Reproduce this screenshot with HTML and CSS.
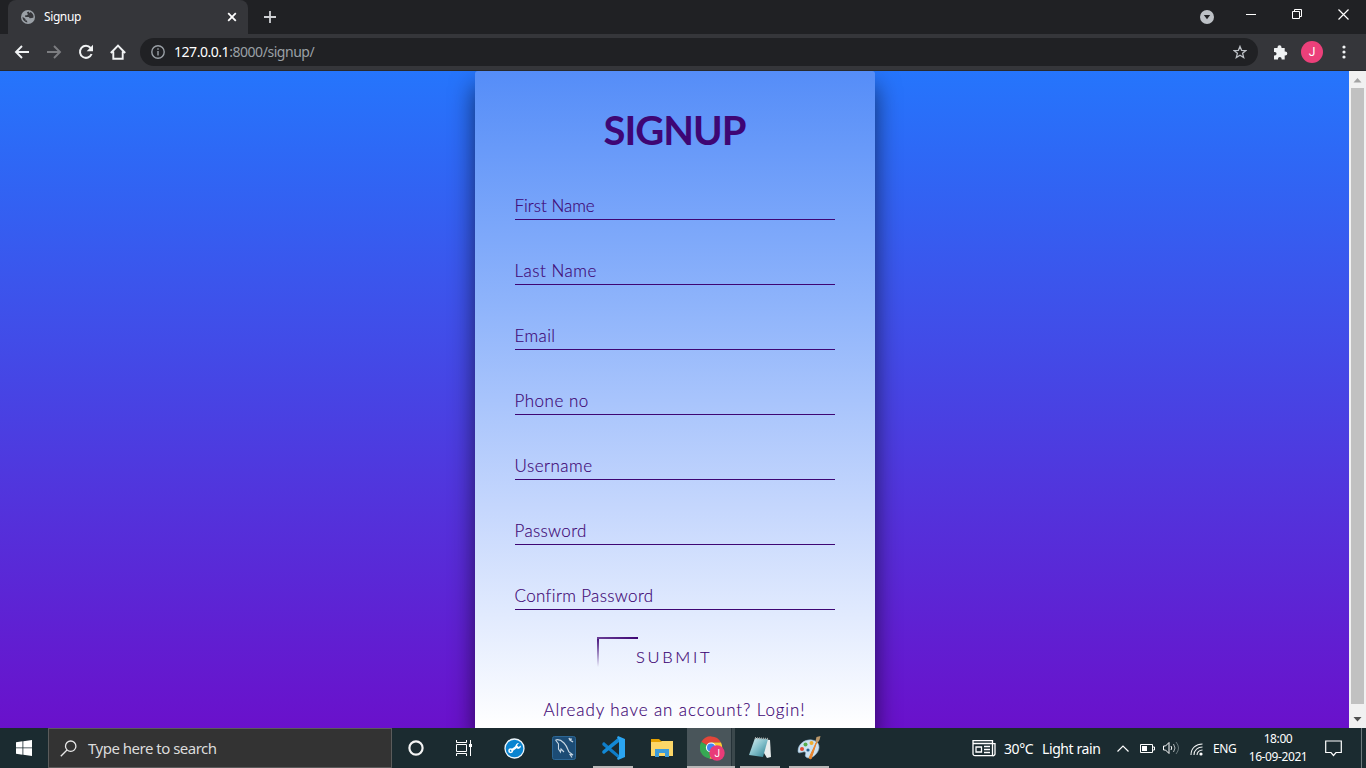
FILE: index.html
```html
<!DOCTYPE html>
<html lang="en">
<head>
<meta charset="utf-8">
<title>Signup</title>
<link rel="stylesheet" href="styles.css">
</head>
<body>
<div class="screen">
  <header class="tabstrip">
    <div class="tab">
      <svg class="globe" width="14" height="14" viewBox="0 0 14 14"><circle cx="7" cy="7" r="7" fill="#9aa0a6"/><path d="M7.500 1.500 5.800 2.600 7 4.200 5.800 5.300H4.200V7h3.600l1 1.200L11 8l1.500-.6a5.500 5.500 0 0 0-3-5.300L8.600 3ZM1.500 6.800l3 2.200v1.500H6l.3 2A5.500 5.500 0 0 1 1.500 6.800Z" fill="#35363a"/></svg>
      <span class="tab-title">Signup</span>
      <svg width="10" height="10" viewBox="0 0 10 10"><path d="m1.200 1.200 7.600 7.600m0-7.600L1.200 8.800" stroke="#fff" stroke-width="1.800"/></svg>
    </div>
    <svg class="plus" width="12" height="12" viewBox="0 0 12 12"><path d="M6 0v12M0 6h12" stroke="#cfd1d4" stroke-width="1.800"/></svg>
    <div class="window-buttons">
      <svg class="tab-search" width="14" height="14" viewBox="0 0 14 14"><circle cx="7" cy="7" r="7" fill="#bdc1c6"/><path d="M3.800 5h6.400L7 9.300Z" fill="#202124"/></svg>
      <svg width="10" height="10" viewBox="0 0 10 10"><path d="M0 5.500h10" stroke="#fff"/></svg>
      <svg width="10" height="10" viewBox="0 0 10 10" fill="none" stroke="#fff"><path d="M.5 2.500h7v7h-7zM2.500 2.500v-2h7v7h-2"/></svg>
      <svg width="11" height="11" viewBox="0 0 11 11"><path d="m.5.500 10 10m0-10-10 10" stroke="#fff" stroke-width="1.200"/></svg>
    </div>
  </header>

  <nav class="toolbar">
    <svg width="16" height="14" viewBox="0 0 16 14" fill="none" stroke="#f1f3f4" stroke-width="1.900"><path d="M15 7H2M8 1 2 7l6 6"/></svg>
    <svg width="16" height="14" viewBox="0 0 16 14" fill="none" stroke="#7c7d80" stroke-width="1.900"><path d="M1 7h13M8 1l6 6-6 6"/></svg>
    <svg width="16" height="16" viewBox="0 0 16 16" fill="none" stroke="#f1f3f4" stroke-width="2"><path d="M13.600 10A6 6 0 1 1 12.600 4"/><path d="M15 .800v6.400H8.700Z" fill="#f1f3f4" stroke="none"/></svg>
    <svg width="16" height="16" viewBox="0 0 16 16" fill="none" stroke="#f1f3f4" stroke-width="1.900"><path d="M.8 9 8 1.700 15.200 9M3.300 7.500v7.300h9.400V7.500"/></svg>
    <div class="address">
      <svg width="14" height="14" viewBox="0 0 14 14" fill="none" stroke="#9aa0a6" stroke-width="1.400"><circle cx="7" cy="7" r="6.200"/><path d="M7 6v4.500M7 3.300v1.500"/></svg>
      <span class="url"><b>127.0.0.1</b>:8000/signup/</span>
      <svg width="14" height="14" viewBox="0 0 14 14" fill="none" stroke="#bdc1c6" stroke-width="1.300"><path d="m7 1.400 1.600 3.900 4.300.3-3.300 2.700 1.100 4.200L7 10.200l-3.700 2.300 1.100-4.200L1.100 5.600l4.300-.3Z"/></svg>
    </div>
    <svg class="puzzle" width="15" height="15" viewBox="0 0 15 15" fill="#f1f3f4"><path d="M1.500 3h3V2.200a2 2 0 0 1 4 0V3h3.200v3.500h.6a2 2 0 0 1 0 4h-.6v4H8.600v-.8a1.800 1.800 0 0 0-3.600 0v.8H1v-4h.8a1.700 1.700 0 0 0 0-3.500H1V3.500Z"/></svg>
    <span class="avatar">J</span>
    <svg class="menu" width="4" height="14" viewBox="0 0 4 14" fill="#f1f3f4"><circle cx="2" cy="2" r="1.600"/><circle cx="2" cy="7" r="1.600"/><circle cx="2" cy="12" r="1.600"/></svg>
  </nav>

  <div class="viewport">
    <main class="page">
      <form class="card">
        <h1>SIGNUP</h1>
        <label class="field first">First Name</label>
        <label class="field last">Last Name</label>
        <label class="field email">Email</label>
        <label class="field phone">Phone no</label>
        <label class="field user">Username</label>
        <label class="field pass">Password</label>
        <label class="field confirm">Confirm Password</label>
        <div class="submit">SUBMIT</div>
        <p class="login">Already have an account? Login!</p>
      </form>
    </main>
    <div class="scrollbar">
      <svg width="17" height="17" viewBox="0 0 17 17"><path d="M4.500 11.500h8l-4-4.500Z" fill="#a3a3a3"/></svg>
      <div class="thumb"></div>
      <svg width="17" height="17" viewBox="0 0 17 17"><path d="M4.500 6h8l-4 4.500Z" fill="#505050"/></svg>
    </div>
  </div>

  <footer class="taskbar">
    <div class="start"><svg width="16" height="16" viewBox="0 0 16 16" fill="#fff"><path d="m0 2.200 6.500-.9v6.200H0zM7.300 1.200 16 0v7.500H7.300zM0 8.300h6.500v6.400L0 13.800zM7.300 8.300H16V16l-8.700-1.200z"/></svg></div>
    <div class="search">
      <svg width="17" height="17" viewBox="0 0 17 17" fill="none" stroke="#e8e8e8" stroke-width="1.300"><circle cx="10.700" cy="6.200" r="5.200"/><path d="M7 10 .8 16.200"/></svg>
      <span>Type here to search</span>
    </div>
    <div class="slot cortana"><svg width="16" height="16" viewBox="0 0 16 16"><circle cx="8" cy="8" r="6.600" fill="none" stroke="#f4f4f4" stroke-width="2.200"/></svg></div>
    <div class="slot taskview"><svg width="17" height="16" viewBox="0 0 17 16" fill="none" stroke="#fff"><path d="M1.500 0v2.500h10V0M1.500 16v-2.500h10V16M1.500 4.500h10v7h-10zM15.500 0v16"/><path d="M14 4h3v3h-3z" fill="#fff" stroke="none"/></svg></div>
    <div class="slot"><svg width="21" height="21" viewBox="0 0 21 21"><circle cx="10.500" cy="10.500" r="9.500" fill="#0a84d0" stroke="#eef6fb" stroke-width="1.300"/><path d="m7.500 12.500 5.500-4" stroke="#fff" stroke-width="2.200"/><path d="M17 7.500 14.500 9 13 7.300 15 5a3.600 3.600 0 0 0-3.600 4.300L14 11a3.600 3.600 0 0 0 3-3.500Z" fill="#fff"/><circle cx="6.700" cy="12.700" r="1.700" fill="none" stroke="#fff" stroke-width="1.500"/></svg></div>
    <div class="slot"><svg width="24" height="24" viewBox="0 0 24 24" fill="none" stroke="#c7d6e2"><rect x=".5" y=".5" width="23" height="23" rx="2" fill="#1c4c75" stroke="#2c6695"/><path d="M3.500 4c3-1 5.500 0 8.500 3 3 3 4 7 5 9l4 3-3-.500 2 3M3.500 4l3 4v5l2 3 .5-3 3 3" stroke-width="1.100"/><path d="m17 2 1 2 3 2M19.500 2.500 18 4.500" stroke-width="1.500"/></svg></div>
    <div class="slot open"><svg width="24" height="24" viewBox="0 0 24 24"><path d="M1.500 7 3 6l15 13v4L1.300 9Z" fill="#0f7dc8"/><path d="M1.300 15 18 1v5L3 18l-1.700-1Z" fill="#1389d5"/><path d="m17 0 7 3v18l-7 3-1-1.500 2-2V4l-2-2.500Z" fill="#2ba5f1"/></svg></div>
    <div class="slot"><svg width="22" height="20" viewBox="0 0 22 20"><path d="M0 1h8l2 2h12v4H0z" fill="#e5a100"/><path d="M0 4h10l1-1h11v15H0z" fill="#fcd667"/><path d="M4 19v-8h14v8h-4v-4H8v4z" fill="#3d9cdb"/></svg></div>
    <div class="slot open active"><svg width="27" height="25" viewBox="0 0 27 25"><path d="M11 11.500 1.300 6A11.200 11.200 0 0 1 21 6.500H11Z" fill="#e24639"/><path d="M11 11.500 1.300 5.900A11.200 11.200 0 0 0 9.500 22.600l4.500-7.500Z" fill="#36a853"/><path d="M11 6.500h10A11.200 11.200 0 0 1 9.500 22.600L15 13Z" fill="#fbc934"/><circle cx="11" cy="11.500" r="5.100" fill="#fff"/><circle cx="11" cy="11.500" r="4" fill="#4285f4"/><circle cx="17" cy="17" r="7.700" fill="#e93b78"/><text x="14.500" y="21" class="badge">J</text></svg></div>
    <div class="slot open"><svg width="24" height="24" viewBox="0 0 24 24"><defs><linearGradient id="pad" x2="1" y2="1"><stop stop-color="#def2f4"/><stop offset=".5" stop-color="#82bfca"/><stop offset="1" stop-color="#287b8d"/></linearGradient></defs><path d="m7 2 15 2 1 17-4 1Z" fill="#e7ecec"/><path d="M7 2 20 3l-5 18-14-2Z" fill="url(#pad)"/><path d="m7 2 14 1" stroke="#a1a6a5" stroke-width="2" stroke-dasharray="1 1"/></svg></div>
    <div class="slot open"><svg width="24" height="24" viewBox="0 0 24 24"><path d="M1 15C1 8 8 3 15 4c8 1 9 9 4 14-3 4-8 5-10 3s1-4-1-5-7 3-7-1Z" fill="#cce2f1" stroke="#8fb5d0" stroke-width=".6"/><circle cx="5" cy="13" r="2" fill="#e34a32"/><circle cx="8.500" cy="8.500" r="2" fill="#56ad4c"/><circle cx="14.500" cy="7" r="2" fill="#eead31"/><circle cx="11" cy="14" r="1.600" fill="#205f90"/><path d="M20 5 14 23l-2-1Z" fill="#e8852e" stroke="#e8852e"/><path d="m18.500 5 1-4 4-1-1 4-2 3Z" fill="#ba976a"/></svg></div>
    <div class="tray">
      <svg width="24" height="17" viewBox="0 0 24 17" fill="none" stroke="#fff" stroke-width="1.300"><path d="M3 .700h17.500v15H3a2 2 0 0 1-2-2v-13Zm17.500 3H23v10a2 2 0 0 1-2.500 2M1 3.500h19.500"/><path d="M4 7h5.500v5H4zM12 6.500h6M12 9.500h6M12 12.500h6"/></svg>
      <span class="temp">30°C</span><span class="rain">Light rain</span>
      <svg class="chevron" width="12" height="7" viewBox="0 0 12 7" fill="none" stroke="#fff" stroke-width="1.200"><path d="m.5 6.500 5.500-5.500 5.500 5.500"/></svg>
      <svg class="battery" width="15" height="9" viewBox="0 0 15 9"><path d="M.5.500h12v8H.5zM13 3h1.500v3H13" fill="none" stroke="#fff"/><path d="M2 2h5v5H2z" fill="#fff"/></svg>
      <svg class="volume" width="17" height="14" viewBox="0 0 17 14" fill="none" stroke="#fff"><path d="M.5 5h2L6 1.500v11L2.500 9h-2zM8 5q1.500 2 0 4"/><path d="M10.500 3q3 4 0 8" stroke="#b2b8b9"/><path d="M13 1q5 6 0 12" stroke="#68777a"/></svg>
      <svg class="wifi" width="13" height="13" viewBox="0 0 13 13" fill="none" stroke="#f0f2f2" stroke-width="1.100"><path d="M1 12C1 5 6 1 12.500 1M4 12c0-5 4-8 8.500-8M7 12c0-3 2.500-5 5.500-5"/><circle cx="11" cy="11" r="1.600" fill="#fff" stroke="none"/></svg>
      <span class="lang">ENG</span>
      <div class="clock"><span class="time">18:00</span><span class="date">16-09-2021</span></div>
      <svg class="notice" width="17" height="17" viewBox="0 0 17 17" fill="none" stroke="#fff" stroke-width="1.200"><path d="M.7 1h15.600v11.500H11l-2.500 3-2.500-3H.7Z"/></svg>
    </div>
    <div class="show-desktop"></div>
  </footer>
</div>
</body>
</html>
```
FILE: styles.css
```css
* { box-sizing: border-box; }
body { margin: 0; font-family: "Noto Sans", sans-serif; }
svg { display: block; flex: none; }
.screen { width: 1366px; height: 768px; display: flex; flex-direction: column; overflow: hidden; }

.tabstrip { height: 34px; background: #202124; display: flex; padding-left: 8px; align-items: center; }
.tab { width: 240px; height: 34px; background: #35363a; border-radius: 8px 8px 0 0; display: flex; align-items: center; padding: 0 11px 0 13px; }
.tab-title { flex: 1; margin-left: 9px; color: #fff; font-size: 12px; line-height: 16px; letter-spacing: -.4px; }
.plus { margin-left: 16px; }
.window-buttons { margin-left: auto; display: flex; align-items: center; gap: 36px; padding: 0 17px 6px 0; }
.tab-search { margin: 6px -4px 0 0; }

.toolbar { height: 37px; background: #35363a; border-bottom: 1px solid #28292c; display: flex; align-items: center; gap: 16px; padding-left: 14px; }
.address { width: 1118px; height: 28px; margin-left: -2px; border-radius: 14px; background: #202124; display: flex; align-items: center; padding: 0 11px; }
.url { flex: 1; margin-left: 9px; font-size: 14px; line-height: 20px; letter-spacing: -.46px; color: #9aa0a6; }
.url b { color: #fff; font-weight: 400; }
.puzzle { margin-left: -1px; }
.avatar { width: 22px; height: 22px; margin: 0 -1px 0 -3px; border-radius: 50%; background: #ec407a; color: #fff; font: 12px/22px Roboto, sans-serif; text-align: center; }
.menu { margin-left: 4px; }

.viewport { height: 657px; display: flex; }
.page { flex: 1; display: flex; justify-content: center; overflow: hidden; background: linear-gradient(#2575fc, #6a11cb); }
.card { width: 400px; height: 657px; padding: 30px 40px 0; border-radius: 3px 3px 0 0; background: linear-gradient(#558df8, #8fb4fb 36%, #c4d6fd 66%, #fff); box-shadow: 0 15px 25px rgba(0, 0, 0, .6); color: #3e0674; font-family: Lato, sans-serif; font-weight: 300; -webkit-text-stroke: .15px #3e0674; }
.card h1 { margin: 0 0 32px; font-size: 40px; line-height: 58px; font-weight: 700; text-align: center; letter-spacing: -1px; -webkit-text-stroke: 0; }
.field { display: block; height: 29px; margin-bottom: 36px; padding-top: 1px; border-bottom: 1px solid #3e0674; font-size: 17px; line-height: 27px; white-space: nowrap; }
.last { letter-spacing: .5px; }
.email { letter-spacing: .4px; }
.phone, .user { letter-spacing: .5px; }
.pass, .confirm { letter-spacing: .35px; }
.submit { width: 155px; height: 40px; margin: -9px auto 0; padding-left: 39px; font-size: 16.500px; line-height: 41px; letter-spacing: 2.700px; background: linear-gradient(90deg, #6b3f96, #3e0674) 0 0 / 41px 2px no-repeat, linear-gradient(#3e0674, transparent) 0 0 / 2px 30px no-repeat; }
.login { margin: 22px 0 0; font-size: 17px; line-height: 21px; letter-spacing: .9px; text-align: center; white-space: nowrap; }
.scrollbar { width: 17px; background: #f1f1f1; display: flex; flex-direction: column; }
.thumb { height: 616px; margin: 0 2px auto; background: #c1c1c1; }

.taskbar { height: 40px; background: #1b2b30; display: flex; color: #fff; }
.start { width: 48px; display: grid; place-items: center; }
.search { width: 344px; background: #333; border: 1px solid #5b5b5b; display: flex; align-items: center; padding-left: 11px; gap: 11px; font-size: 15px; letter-spacing: -.5px; color: #dcdcdc; }
.slot { width: 49px; height: 40px; display: grid; place-items: center; }
.cortana { width: 48px; }
.taskview { width: 50px; padding-right: 3px; }
.open { background: linear-gradient(#b8b8b8, #b8b8b8) 50% 100% / 40px 2px no-repeat; }
.active { padding-left: 5px; background: linear-gradient(#b8b8b8, #b8b8b8) 1px 100% / 48px 2px no-repeat, linear-gradient(90deg, #49555a 0 44px, #253238 44px 45px, #3b484c 45px) 1px 0 / 48px 40px no-repeat; }
.badge { fill: #fff; font: 10px Roboto, sans-serif; }
.tray { margin-left: auto; display: flex; align-items: center; padding-right: 19px; font-size: 14px; letter-spacing: -.4px; white-space: nowrap; }
.temp { width: 30px; margin-left: 8px; }
.rain { width: 58px; margin-left: 8px; }
.chevron { margin-left: 17px; }
.battery { margin-left: 11px; }
.volume { margin-left: 8px; }
.wifi { margin: 2px 0 0 10px; }
.lang { width: 24px; margin-left: 10px; font-size: 12px; }
.clock { width: 60px; margin-left: 11px; display: flex; flex-direction: column; align-items: center; font-size: 12px; line-height: 18px; padding-bottom: 1px; }
.notice { margin: 1px 0 0 17px; }
.show-desktop { width: 5px; border-left: 1px solid #6e7a7d; }
```
